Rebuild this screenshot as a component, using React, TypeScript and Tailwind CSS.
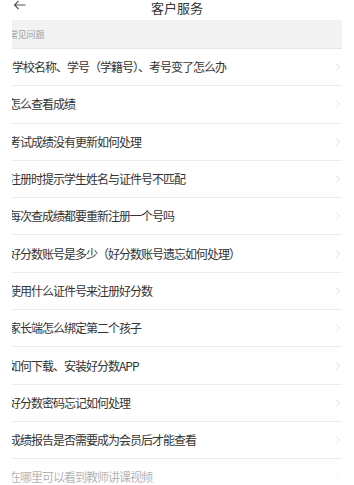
import { ChevronRight } from 'lucide-react';

const questions = [
  '学校名称、学号（学籍号）、考号变了怎么办',
  '怎么查看成绩',
  '考试成绩没有更新如何处理',
  '注册时提示学生姓名与证件号不匹配',
  '每次查成绩都要重新注册一个号吗',
  '好分数账号是多少（好分数账号遗忘如何处理）',
  '使用什么证件号来注册好分数',
  '家长端怎么绑定第二个孩子',
  '如何下载、安装好分数APP',
  '好分数密码忘记如何处理',
  '成绩报告是否需要成为会员后才能查看',
  '在哪里可以看到教师讲课视频',
];

export default function App() {
  return (
    <div
      className="w-[354px] h-[485px] overflow-hidden bg-white"
      style={{ fontFamily: '"Noto Sans CJK SC", "Noto Sans", sans-serif' }}
    >
      {/* Header */}
      <div className="h-[20px] flex items-start px-[13px]">
        <svg width="13" height="10" viewBox="0 0 13 10" className="shrink-0">
          <path d="M12.5 5H1.5M5.5 1L1.5 5L5.5 9" fill="none" stroke="#555" strokeWidth="1.1" />
        </svg>
        <div className="flex-1 text-center text-[13px] leading-[14px] text-[#333] mt-[1px] pr-[13px]">
          客户服务
        </div>
      </div>

      <div className="mx-[12px] overflow-hidden">
        {/* Section header */}
        <div className="h-[29px] bg-[#f2f2f2] border-b border-[#e6e6e6] flex items-center pt-[2px]">
          <span className="-ml-[3px] text-[9px] text-[#a0a0a0] tracking-[-0.2px]">常见问题</span>
        </div>

        {questions.map((q, i) => {
          const faded = i === questions.length - 1;
          return (
            <div
              key={q}
              className="h-[37.3px] border-b border-[#ececec] flex items-center justify-between"
            >
              <span
                className={`${i === 0 ? 'ml-0' : '-ml-[3px]'} text-[12px] tracking-[-1px] whitespace-nowrap ${
                  faded ? 'text-[#b5b5b5]' : 'text-[#333]'
                }`}
              >
                {q}
              </span>
              <ChevronRight
                className={`w-[12px] h-[12px] -mr-[2px] ${faded ? 'text-[#e6e6e6]' : 'text-[#cfcfcf]'}`}
                strokeWidth={1.4}
              />
            </div>
          );
        })}
      </div>
    </div>
  );
}
